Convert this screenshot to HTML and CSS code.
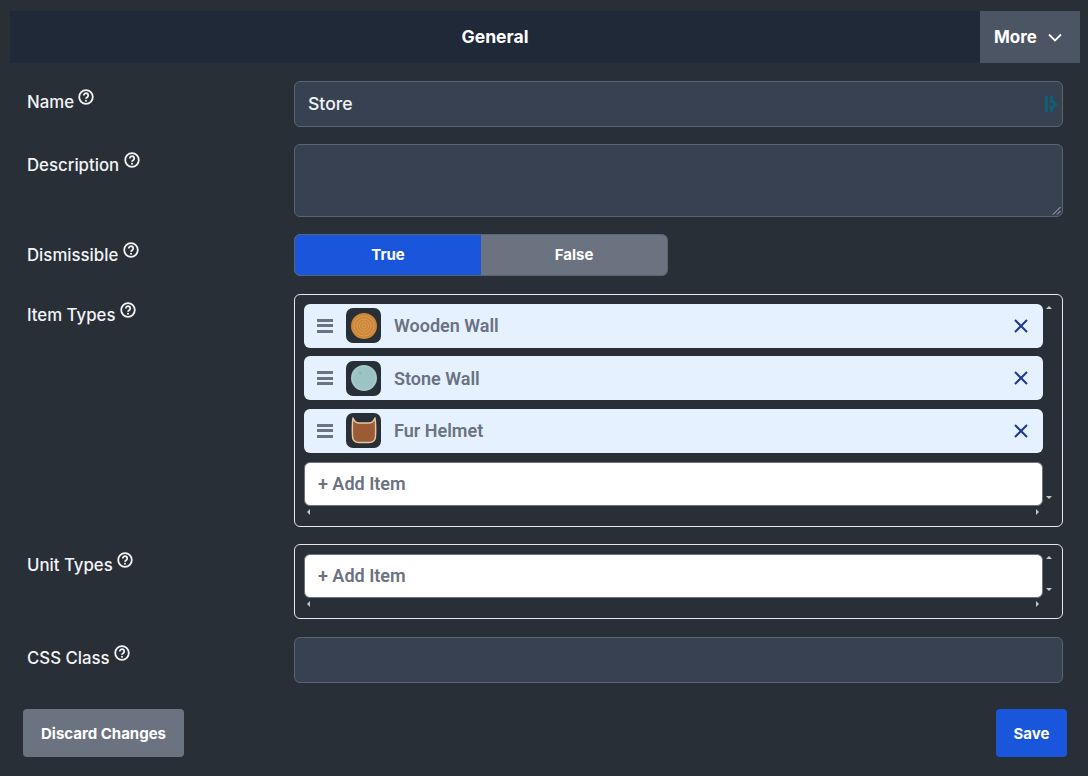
FILE: index.html
```html
<!DOCTYPE html>
<html lang="en">
<head>
    <meta charset="UTF-8">
    <meta name="viewport" content="width=device-width, initial-scale=1.0">
    <title>General</title>
    <link rel="stylesheet" href="styles.css">
</head>
<body>
    <div class="tabs">
        <div class="tab-title">General</div>
        <div class="tab-more">More
            <svg width="14" height="9" viewBox="0 0 14 9"><path d="M1 1.500l6 6 6-6" fill="none" stroke="#fff" stroke-width="1.800"/></svg>
        </div>
    </div>

    <form class="form">
        <div class="row">
            <label class="label">Name <svg class="help" viewBox="0 0 16 16"><circle cx="8" cy="8" r="6.800"/><path d="M5.800 6.400a2.200 2.200 0 1 1 3.400 1.800c-.8.5-1.200.9-1.200 1.600"/><circle class="dot" cx="8" cy="11.800" r="1"/></svg></label>
            <div class="input input-name">Store
                <svg class="input-icon" width="13" height="16" viewBox="0 0 13 16"><path d="M0 0h3v16H0zM5 0h3v7H5zM5 10h3v6H5zM8 4l5 4-5 5z" fill="#0d5f74"/></svg>
            </div>
        </div>
        <div class="row">
            <label class="label">Description <svg class="help" viewBox="0 0 16 16"><circle cx="8" cy="8" r="6.800"/><path d="M5.800 6.400a2.200 2.200 0 1 1 3.400 1.800c-.8.5-1.200.9-1.200 1.600"/><circle class="dot" cx="8" cy="11.800" r="1"/></svg></label>
            <div class="input input-area">
                <svg class="grip" width="9" height="9" viewBox="0 0 9 9"><path d="M8.500 1L1 8.500M8.500 5L5 8.500" stroke="#b6bcc6" fill="none"/></svg>
            </div>
        </div>
        <div class="row">
            <label class="label">Dismissible <svg class="help" viewBox="0 0 16 16"><circle cx="8" cy="8" r="6.800"/><path d="M5.800 6.400a2.200 2.200 0 1 1 3.400 1.800c-.8.5-1.200.9-1.200 1.600"/><circle class="dot" cx="8" cy="11.800" r="1"/></svg></label>
            <div class="toggle">
                <div class="toggle-opt toggle-on">True</div>
                <div class="toggle-opt">False</div>
            </div>
        </div>
        <div class="row">
            <label class="label">Item Types <svg class="help" viewBox="0 0 16 16"><circle cx="8" cy="8" r="6.800"/><path d="M5.800 6.400a2.200 2.200 0 1 1 3.400 1.800c-.8.5-1.200.9-1.200 1.600"/><circle class="dot" cx="8" cy="11.800" r="1"/></svg></label>
            <div class="list">
                <div class="chip">
                    <span class="drag"></span>
                    <span class="thumb">
                        <svg width="30" height="30" viewBox="0 0 30 30"><circle cx="15" cy="15" r="13" fill="#cc873a"/><g fill="none" stroke="#dd9c52"><circle cx="15" cy="15" r="10"/><circle cx="15" cy="15" r="7"/><circle cx="15" cy="15" r="4.500"/><circle cx="15" cy="15" r="2"/></g></svg>
                    </span>
                    <span class="chip-name">Wooden Wall</span>
                    <svg class="remove" width="14" height="14" viewBox="0 0 14 14"><path d="M1 1l12 12M13 1L1 13" stroke="#1e3a8a" stroke-width="2" fill="none"/></svg>
                </div>
                <div class="chip">
                    <span class="drag"></span>
                    <span class="thumb">
                        <svg width="30" height="30" viewBox="0 0 30 30"><circle cx="15" cy="15" r="13" fill="#9cc4c4"/><circle cx="15" cy="15" r="12" fill="none" stroke="#a8cdcd"/><circle cx="11" cy="10" r="1.500" fill="#8db6b7"/></svg>
                    </span>
                    <span class="chip-name">Stone Wall</span>
                    <svg class="remove" width="14" height="14" viewBox="0 0 14 14"><path d="M1 1l12 12M13 1L1 13" stroke="#1e3a8a" stroke-width="2" fill="none"/></svg>
                </div>
                <div class="chip">
                    <span class="drag"></span>
                    <span class="thumb">
                        <svg width="30" height="30" viewBox="0 0 30 30"><path d="M4 2Q6 7 10 7H20Q24 7 26 2Q27 9 26.500 20C26.500 25 23 26.500 20 26.500H10C7 26.500 3.500 25 3.500 20Q3 9 4 2z" fill="#9a5c36" stroke="#e6c6a2" stroke-width="1.500" stroke-linejoin="round"/></svg>
                    </span>
                    <span class="chip-name">Fur Helmet</span>
                    <svg class="remove" width="14" height="14" viewBox="0 0 14 14"><path d="M1 1l12 12M13 1L1 13" stroke="#1e3a8a" stroke-width="2" fill="none"/></svg>
                </div>
                <div class="add-item">+ Add Item</div>
                <span class="arrow arrow-up"></span>
                <span class="arrow arrow-down"></span>
                <span class="arrow arrow-left"></span>
                <span class="arrow arrow-right"></span>
            </div>
        </div>
        <div class="row">
            <label class="label">Unit Types <svg class="help" viewBox="0 0 16 16"><circle cx="8" cy="8" r="6.800"/><path d="M5.800 6.400a2.200 2.200 0 1 1 3.400 1.800c-.8.5-1.200.9-1.200 1.600"/><circle class="dot" cx="8" cy="11.800" r="1"/></svg></label>
            <div class="list list-short">
                <div class="add-item">+ Add Item</div>
                <span class="arrow arrow-up"></span>
                <span class="arrow arrow-down"></span>
                <span class="arrow arrow-left"></span>
                <span class="arrow arrow-right"></span>
            </div>
        </div>
        <div class="row">
            <label class="label">CSS Class <svg class="help" viewBox="0 0 16 16"><circle cx="8" cy="8" r="6.800"/><path d="M5.800 6.400a2.200 2.200 0 1 1 3.400 1.800c-.8.5-1.200.9-1.200 1.600"/><circle class="dot" cx="8" cy="11.800" r="1"/></svg></label>
            <div class="input input-name"></div>
        </div>
    </form>

    <div class="actions">
        <button class="btn btn-discard" type="button">Discard Changes</button>
        <button class="btn btn-save" type="button">Save</button>
    </div>
</body>
</html>
```

FILE: styles.css
```css
body {
    margin: 0;
    height: 776px;
    overflow: hidden;
    background-color: #282f36;
    font-family: Inter, "Liberation Sans", sans-serif;
    color: #f3f4f6;
}
.tabs {
    display: flex;
    height: 52px;
    margin: 11px 8px 0 10px;
    background-color: #202938;
    font-weight: 700;
    color: #fff;
}
.tab-title {
    flex: 1;
    text-align: center;
    line-height: 52px;
    font-size: 17.6px;
}
.tab-more {
    width: 100px;
    box-sizing: border-box;
    display: flex;
    align-items: center;
    gap: 11px;
    padding-left: 14px;
    background-color: #4b5563;
    font-size: 17px;
    font-weight: 700;
}
.form {
    display: flex;
    flex-direction: column;
    gap: 17.2px;
    margin: 18px 25px 0 27px;
}
.row {
    display: flex;
}
.label {
    width: 267px;
    flex-shrink: 0;
    padding-top: 8px;
    font-size: 16.8px;
    line-height: 24px;
    font-weight: 500;
}
.help {
    width: 16px;
    height: 16px;
    vertical-align: 3px;
    fill: none;
    stroke: #f3f4f6;
    stroke-width: 1.8;
}
.help .dot {
    fill: #f3f4f6;
    stroke: none;
}
.input {
    flex: 1;
    position: relative;
    box-sizing: border-box;
    background-color: #374151;
    border: 1px solid #5b6472;
    border-radius: 6px;
    padding: 0 13px;
    font-size: 17.6px;
    font-weight: 500;
}
.input-name {
    height: 46px;
    line-height: 44px;
}
.input-area {
    height: 73px;
}
.input-icon {
    position: absolute;
    right: 4px;
    top: 14px;
}
.grip {
    position: absolute;
    right: 1px;
    bottom: 1px;
}
.toggle {
    display: flex;
    width: 374px;
    height: 42px;
    box-sizing: border-box;
    border: 1px solid #5b6472;
    border-radius: 6px;
    overflow: hidden;
    font-size: 15px;
    font-weight: 700;
    color: #fff;
    background-color: #6b7280;
}
.toggle-opt {
    flex: 1;
    text-align: center;
    line-height: 40px;
}
.toggle-on {
    background-color: #1a56db;
}
.list {
    flex: 1;
    position: relative;
    display: flex;
    flex-direction: column;
    gap: 8.7px;
    box-sizing: border-box;
    border: 1px solid #e5e7eb;
    border-radius: 6px;
    padding: 9px 19px 20px 9px;
}
.list-short {
    padding-bottom: 20.5px;
}
.chip {
    display: flex;
    align-items: center;
    height: 44px;
    border-radius: 6px;
    background-color: #e6f1ff;
    padding: 0 15px 0 13px;
}
.drag {
    width: 16px;
    height: 8px;
    border-top: 3px solid #6b7280;
    border-bottom: 3px solid #6b7280;
    background: linear-gradient(#6b7280, #6b7280) center / 100% 3px no-repeat;
}
.thumb {
    display: flex;
    align-items: center;
    justify-content: center;
    width: 35px;
    height: 35px;
    margin-left: 13px;
    border-radius: 7px;
    background-color: #282f36;
}
.chip-name {
    flex: 1;
    margin-left: 13px;
    font-family: Roboto, sans-serif;
    font-size: 18px;
    font-weight: 600;
    color: #6b7280;
}
.add-item {
    height: 44px;
    box-sizing: border-box;
    line-height: 42px;
    padding-left: 13px;
    border: 1px solid #6b7280;
    border-radius: 6px;
    background-color: #fff;
    font-family: Roboto, sans-serif;
    font-size: 18px;
    font-weight: 600;
    color: #6b7280;
}
.arrow {
    position: absolute;
    width: 0;
    height: 0;
    border: 3px solid transparent;
}
.arrow-up {
    top: 11px;
    right: 10px;
    border-top-width: 0;
    border-bottom: 3px solid #c3c7cc;
}
.arrow-down {
    bottom: 27px;
    right: 10px;
    border-bottom-width: 0;
    border-top: 3px solid #c3c7cc;
}
.arrow-left {
    bottom: 11px;
    left: 12px;
    border-left-width: 0;
    border-right: 3px solid #c3c7cc;
}
.arrow-right {
    bottom: 11px;
    right: 23px;
    border-right-width: 0;
    border-left: 3px solid #c3c7cc;
}
.actions {
    display: flex;
    justify-content: space-between;
    margin: 26.5px 21px 0 23px;
}
.btn {
    height: 48px;
    border: none;
    border-radius: 4px;
    font-family: inherit;
    font-size: 15px;
    font-weight: 700;
    color: #fff;
}
.btn-discard {
    width: 161px;
    background-color: #6b7280;
}
.btn-save {
    width: 71px;
    background-color: #1a56db;
}
```
